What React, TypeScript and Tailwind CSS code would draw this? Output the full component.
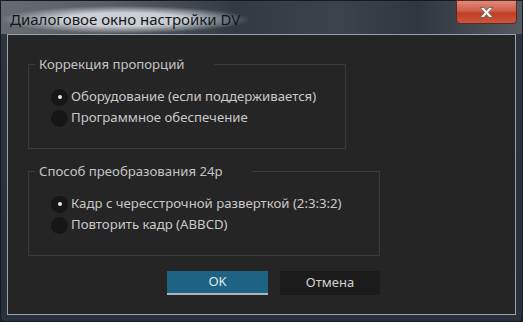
import React from "react";

const groups = [
  {
    legend: "Коррекция пропорций",
    width: "w-[318px]",
    options: ["Оборудование (если поддерживается)", "Программное обеспечение"],
  },
  {
    legend: "Способ преобразования 24p",
    width: "w-[352px]",
    options: ["Кадр с чересстрочной разверткой (2:3:3:2)", "Повторить кадр (ABBCD)"],
  },
];

function Radio({ label, checked }: { label: string; checked: boolean }) {
  return (
    <label className="flex h-[21px] items-center gap-[3px]">
      <span className="flex h-[17px] w-[17px] items-center justify-center rounded-full bg-[#161616]">
        {checked && <span className="h-[4px] w-[4px] rounded-full bg-[#e8e8e8]" />}
      </span>
      <span className="text-[13.2px] text-[#c9c9c9]">{label}</span>
    </label>
  );
}

export default function App() {
  return (
    <div className="h-[322px] w-[523px] overflow-hidden bg-[#1e2329] font-['Noto_Sans',sans-serif]">
      <div className="flex h-full w-full flex-col rounded-t-[7px] rounded-b-[5px] border border-[#161a1f] bg-[linear-gradient(180deg,#3f454c_0%,#2d343d_12%,#27303b_100%)]">
        <div className="flex h-[33px] items-start justify-between bg-[linear-gradient(90deg,#666b71_0%,#5a5f66_20%,#333a43_45%,#3d434a_65%,#2f363f_80%,#555a61_100%)]">
          <span className="ml-[1px] mt-[5px] rounded-full bg-[radial-gradient(ellipse_at_center,rgba(225,228,232,0.85)_35%,rgba(225,228,232,0)_72%)] px-[8px] py-[2px] text-[15px] text-[#111820]">
            Диалоговое окно настройки DV
          </span>
          <button className="mr-[5px] mt-[-1px] flex h-[24px] w-[61px] items-center justify-center rounded-b-[4px] border border-[#5a2a24] bg-[linear-gradient(180deg,#e08a7b_0%,#cf5e47_45%,#bd3f25_55%,#cc563c_100%)]">
            <svg width="17" height="13" viewBox="0 0 17 13">
              <path
                d="M2 1.5h4l2.5 3 2.5-3h4l-4.5 5 4.5 5h-4L8.5 8.5 6 11.5H2l4.5-5z"
                fill="#f4f4f4"
                stroke="#5c5c5c"
                strokeWidth="0.8"
              />
            </svg>
          </button>
        </div>
        <div className="mx-[6px] mb-[6px] flex flex-1 flex-col border border-[#9aa2ab] bg-[#252525] pl-[20px] pt-[20px]">
          <div className="flex w-[352px] flex-col gap-[13px]">
            {groups.map((g) => (
              <fieldset key={g.legend} className={`${g.width} h-[94px] border border-[#3a3a3a]`}>
                <legend className="ml-[6px] pl-[4px] pr-[29px] text-[13.2px] text-[#c4c4c4]">
                  {g.legend}
                </legend>
                <div className="pl-[22px] pt-[12px]">
                  {g.options.map((o, i) => (
                    <Radio key={o} label={o} checked={i === 0} />
                  ))}
                </div>
              </fieldset>
            ))}
            <div className="mt-[2px] flex justify-end gap-[12px]">
              <button className="h-[24px] w-[101px] border-b-2 border-[#a9b4bc] bg-[#1f6384] text-[13px] text-[#dfe6ea]">
                OK
              </button>
              <button className="h-[24px] w-[100px] bg-[#1b1b1b] text-[13px] text-[#d0d0d0]">
                Отмена
              </button>
            </div>
          </div>
        </div>
      </div>
    </div>
  );
}
